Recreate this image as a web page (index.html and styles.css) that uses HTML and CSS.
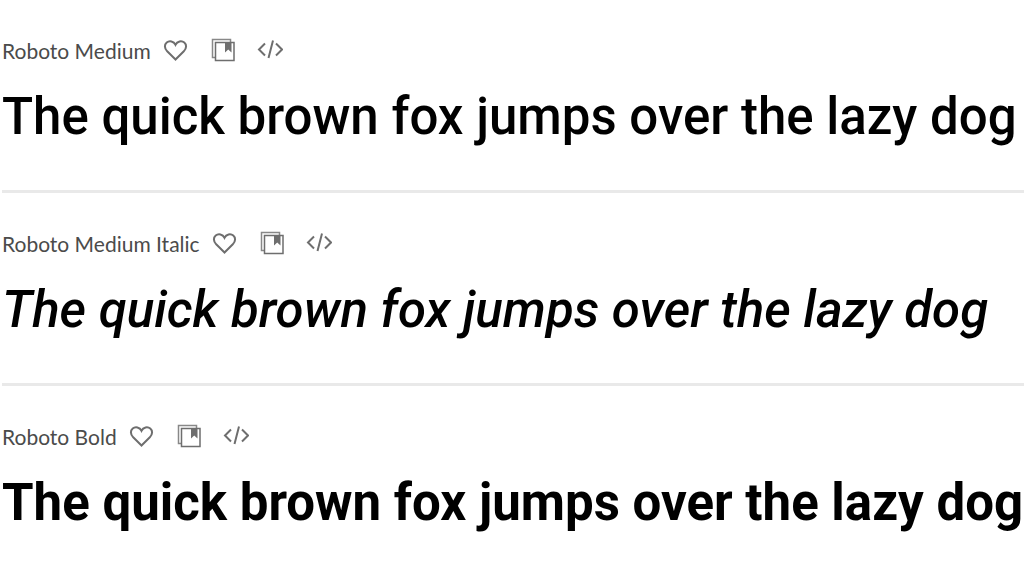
FILE: index.html
```html
<!DOCTYPE html>
<html lang="en">
<head>
    <meta charset="UTF-8">
    <meta name="viewport" content="width=device-width, initial-scale=1.0">
    <title>Roboto</title>
    <link rel="stylesheet" href="styles.css">
</head>
<body>
    <svg class="sprite" aria-hidden="true">
        <symbol id="icon-heart" viewBox="0 0 26 24">
            <path d="M12.500 21.500 L4.200 13.300 C1.200 10.200 1.300 6.600 3.700 4.600 C6.400 2.300 10.700 3.200 12.500 6.800 C14.300 3.200 18.600 2.300 21.300 4.600 C23.700 6.600 23.800 10.200 20.800 13.300 Z"/>
        </symbol>
        <symbol id="icon-library" viewBox="0 0 26 24">
            <path class="thin back" d="M5 19.500 H2.500 V1.500 H20.500 V4"/>
            <path class="thin" d="M5.500 4.500 H24 V22.500 H5.500 Z"/>
            <path class="solid" d="M15 4 H21.500 V14.500 L18.250 11.500 L15 14.500 Z"/>
        </symbol>
        <symbol id="icon-code" viewBox="0 0 26 24">
            <path d="M8 5.500 L2 11.500 L8 17.500 M19 5.500 L25 11.500 L19 17.500 M16 2.500 L11.500 20"/>
        </symbol>
    </svg>

    <main class="styles">
        <section class="style">
            <div class="style-header">
                <h2>Roboto Medium</h2>
                <button class="icon-btn" aria-label="Add to favorites"><svg><use href="#icon-heart"/></svg></button>
                <button class="icon-btn" aria-label="Add to library"><svg><use href="#icon-library"/></svg></button>
                <button class="icon-btn" aria-label="Embed code"><svg><use href="#icon-code"/></svg></button>
            </div>
            <p class="sample medium">The quick brown fox jumps over the lazy dog</p>
        </section>

        <section class="style">
            <div class="style-header">
                <h2>Roboto Medium Italic</h2>
                <button class="icon-btn" aria-label="Add to favorites"><svg><use href="#icon-heart"/></svg></button>
                <button class="icon-btn" aria-label="Add to library"><svg><use href="#icon-library"/></svg></button>
                <button class="icon-btn" aria-label="Embed code"><svg><use href="#icon-code"/></svg></button>
            </div>
            <p class="sample medium italic">The quick brown fox jumps over the lazy dog</p>
        </section>

        <section class="style">
            <div class="style-header">
                <h2>Roboto Bold</h2>
                <button class="icon-btn" aria-label="Add to favorites"><svg><use href="#icon-heart"/></svg></button>
                <button class="icon-btn" aria-label="Add to library"><svg><use href="#icon-library"/></svg></button>
                <button class="icon-btn" aria-label="Embed code"><svg><use href="#icon-code"/></svg></button>
            </div>
            <p class="sample bold">The quick brown fox jumps over the lazy dog</p>
        </section>
    </main>
</body>
</html>
```
FILE: styles.css
```css
* {
    margin: 0;
    padding: 0;
    box-sizing: border-box;
}

body {
    font-family: Lato, "Open Sans", sans-serif;
    background: #fff;
    color: #000;
}

.sprite {
    display: none;
}

.styles {
    padding-left: 2px;
}

.style {
    padding: 36px 0 41px;
    border-bottom: 3px solid #e9e9e9;
}

.style:last-child {
    padding-bottom: 0;
    border-bottom: none;
}

.style-header {
    display: flex;
    align-items: center;
    gap: 21px;
    height: 28px;
}

.style-header h2 {
    font-size: 21px;
    font-weight: 400;
    color: #4b4b4b;
    margin-right: -9px;
}

.icon-btn {
    width: 26px;
    height: 24px;
    background: none;
    border: none;
    cursor: pointer;
}

.icon-btn svg {
    display: block;
    width: 100%;
    height: 100%;
    fill: none;
    stroke: #6e6e6e;
    stroke-width: 2;
}

.thin {
    stroke-width: 1.5;
}

.back {
    stroke: #888;
}

.solid {
    fill: #6e6e6e;
    stroke: none;
}

.sample {
    font-family: Roboto, sans-serif;
    font-size: 51px;
    line-height: 64px;
    margin-top: 21px;
    white-space: nowrap;
}

.medium {
    font-weight: 500;
}

.bold {
    font-weight: 700;
}

.italic {
    font-style: italic;
}
```
